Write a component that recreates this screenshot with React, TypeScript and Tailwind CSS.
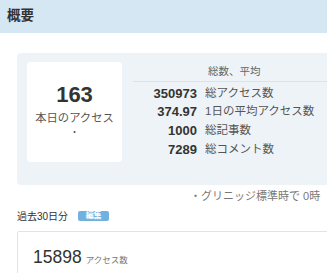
import React from "react";

const rows = [
  { n: "350973", l: "総アクセス数" },
  { n: "374.97", l: "1日の平均アクセス数" },
  { n: "1000", l: "総記事数" },
  { n: "7289", l: "総コメント数" },
];

export default function App() {
  return (
    <div
      className="w-[327px] h-[273px] overflow-hidden bg-white text-[#333]"
      style={{ fontFamily: '"Liberation Sans", "Noto Sans CJK JP", sans-serif' }}
    >
      <div className="w-[420px]">
        <div className="h-[33px] bg-[#d5e7f3] pl-[7px] flex items-center">
          <span className="text-[13.5px] font-bold text-[#333]">概要</span>
        </div>
        <div className="pl-[17px]">
          <div className="mt-[20px] h-[132px] bg-[#eef3f7] rounded-[4px] pt-[9px] pl-[10px] flex">
            <div className="w-[95px] h-[100px] bg-white rounded-[4px] flex flex-col items-center pt-[22px]">
              <div className="text-[22px] font-bold leading-[22px] text-[#333]">163</div>
              <div className="text-[11.3px] leading-[14px] mt-[5px] text-[#555]">本日のアクセス</div>
              <div className="text-[9px] leading-[10px] mt-[2px] text-[#555]">・</div>
            </div>
            <div className="ml-[11px] flex-1 flex flex-col">
              <div className="h-[20px] border-b border-[#d5e4ef] flex items-center pl-[75px]">
                <span className="text-[10.5px] text-[#666]">総数、平均</span>
              </div>
              <div className="pt-[2px]">
                {rows.map((r) => (
                  <div key={r.n} className="flex items-center h-[18.7px]">
                    <span className="w-[64px] text-right text-[13px] font-bold text-[#333]">{r.n}</span>
                    <span className="ml-[8px] text-[11.5px] text-[#555]">{r.l}</span>
                  </div>
                ))}
              </div>
            </div>
          </div>
          <div className="mt-[5px] pl-[173px] text-[11px] leading-[13px] text-[#777] whitespace-nowrap">
            ・グリニッジ標準時で 0時
          </div>
          <div className="mt-[7px] flex items-center h-[12px]">
            <span className="text-[10px] text-[#333]">過去30日分</span>
            <span className="ml-[10px] h-[10px] w-[31px] rounded-[2px] bg-[#72b1dd] text-white text-[8px] leading-[10px] font-bold flex items-center justify-center">
              編集
            </span>
          </div>
          <div className="mt-[9px] h-[60px] border border-[#d5e7f3] rounded-[2px] pt-[12px] pl-[15px] flex items-baseline">
            <span className="text-[17.5px] text-[#333]">15898</span>
            <span className="ml-[4px] text-[8.5px] text-[#777]">アクセス数</span>
          </div>
        </div>
      </div>
    </div>
  );
}
